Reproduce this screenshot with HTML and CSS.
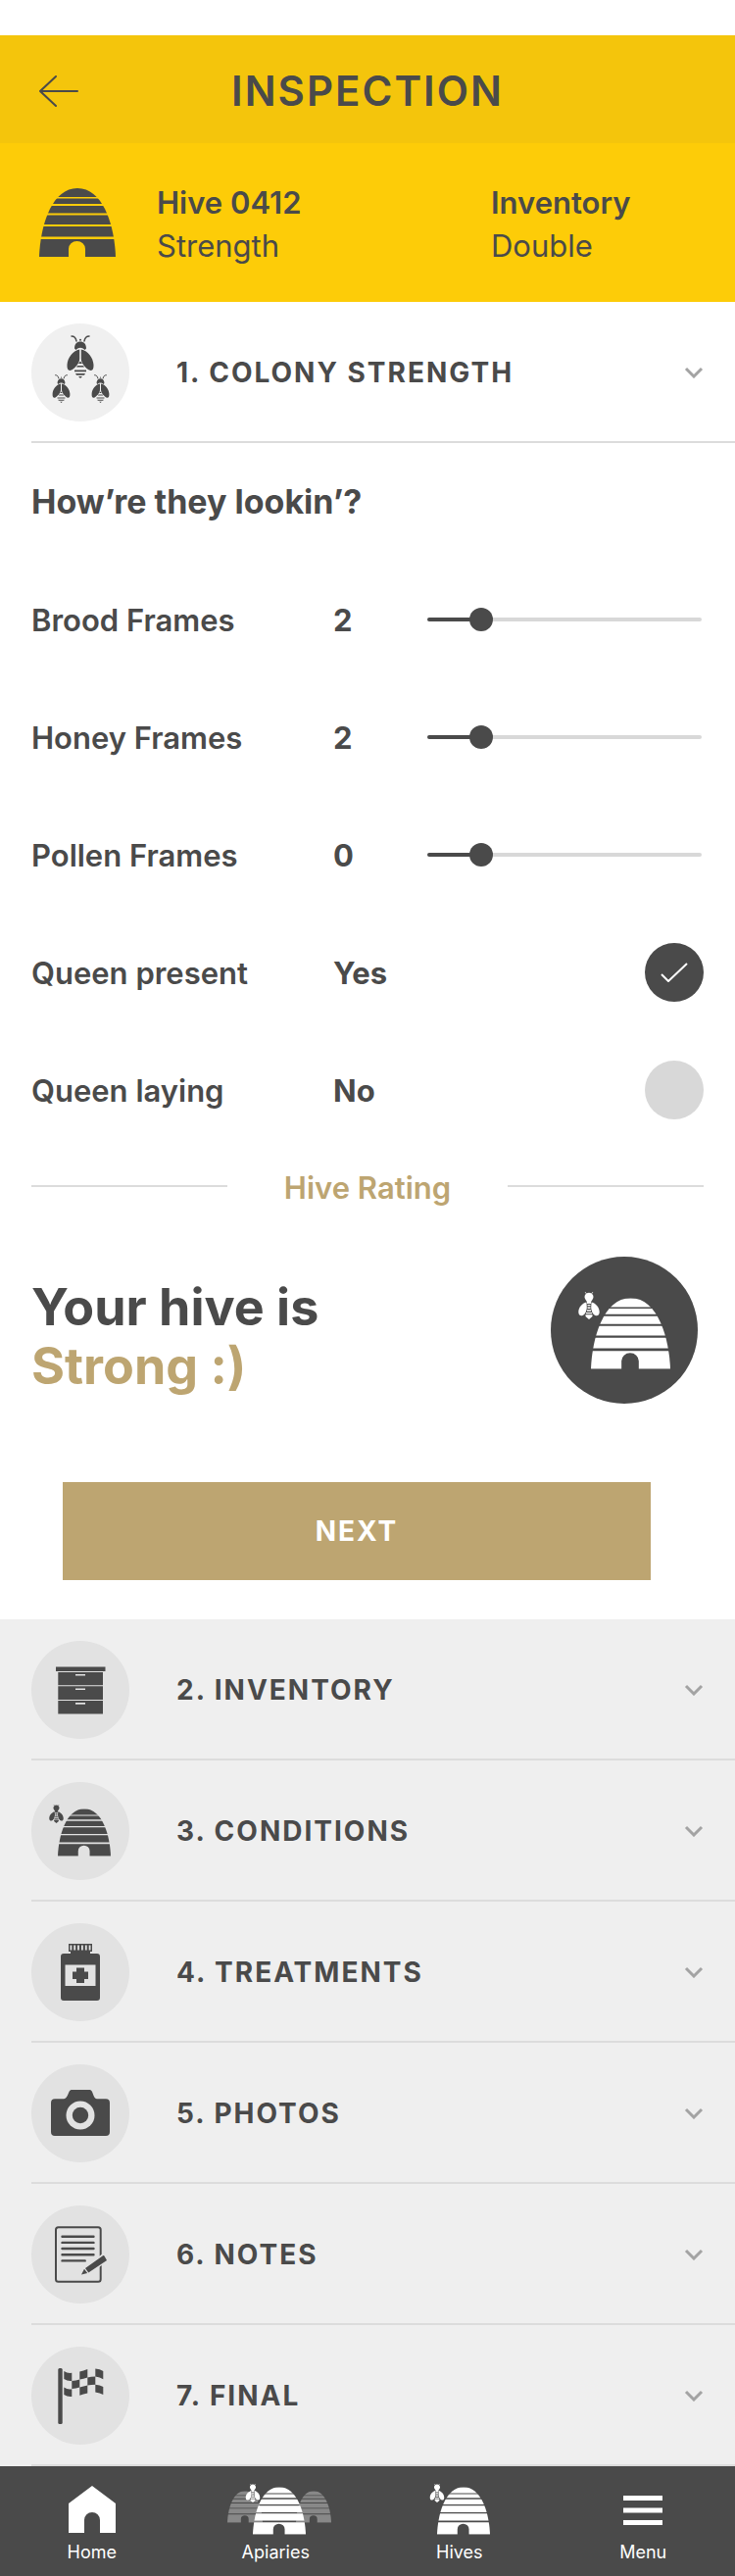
FILE: index.html
```html
<!DOCTYPE html>
<html lang="en">
<head>
<meta charset="utf-8">
<meta name="viewport" content="width=device-width, initial-scale=1">
<title>Inspection</title>
<link rel="stylesheet" href="styles.css">
</head>
<body>
<svg class="sprite" aria-hidden="true">
  <defs>
    <clipPath id="dome"><path d="M0 70C1 40 12 0 39 0C66 0 77 40 78 70Z"/></clipPath>
    <symbol id="hive" viewBox="0 0 78 70">
      <g clip-path="url(#dome)">
        <path d="M0 0H78V9H0ZM0 10.500H78V16H0ZM0 18H78V25.500H0ZM0 27.500H78V37H0ZM0 39H78V49.500H0ZM0 52H78V70H47V62a8.500 8 0 0 0-17 0V70H0Z"/>
      </g>
    </symbol>
    <symbol id="bee" viewBox="0 0 28 44">
      <path d="M5 1C8 1 9.500 3 10 6M23 1C20 1 18.500 3 18 6" fill="none" stroke="currentColor" stroke-width="1.500" stroke-linecap="round"/>
      <circle cx="14" cy="4.700" r="1"/>
      <path d="M8 13.500C8 9 10.500 6.500 14 6.500S20 9 20 13.500L18.500 15C17 13.500 15.500 12.800 14 12.800S11 13.500 9.500 15Z"/>
      <path d="M13.200 14.500C6 16 1 23 .500 30C.200 35 2 37 5 35.500C9.500 33 13.200 28 13.200 24ZM14.800 14.500C22 16 27 23 27.500 30C27.800 35 26 37 23 35.500C18.500 33 14.800 28 14.800 24Z"/>
      <path d="M14 26.500L16 29H12ZM11 31H17L18 32.500H10ZM8 35.500H20V37.200H8ZM9 39H19L18 40.700H10ZM12 42H16L14 44Z"/>
    </symbol>
    <symbol id="fly" viewBox="0 0 22 28">
      <path d="M7 0L8.500 2M15 0L13.500 2" fill="none" stroke="currentColor" stroke-width=".700"/>
      <path d="M11 .800C14 .800 15.500 3 15.500 5.200C15.500 7.500 13 9 13 10.500V12H9V10.500C9 9 6.500 7.500 6.500 5.200C6.500 3 8 .800 11 .800Z"/>
      <path d="M8.500 10.500C4 11.500 .300 16 .300 20.500C.300 23 1.500 24.500 3.800 24.300C6 24 8.500 21 8.800 16ZM13.500 10.500C18 11.500 21.700 16 21.700 20.500C21.700 23 20.500 24.500 18.200 24.300C16 24 13.500 21 13.200 16Z"/>
      <path d="M9.500 13H12.500V14.300H9.500ZM9.500 15.500H12.500V17H9.500ZM9 18.200H13V19.700H9ZM8 21H14V22.300H8ZM7.500 23.300H14.500V25L11 28L7.500 25Z"/>
    </symbol>
  </defs>
</svg>

<div class="screen">
  <header class="topbar">
    <a class="back" href="#" aria-label="Back">
      <svg width="40" height="32" viewBox="0 0 40 32" fill="none" stroke="currentColor" stroke-width="2" stroke-linecap="round"><path d="M39 16H1M17 1L1 16L17 31"/></svg>
    </a>
    <h1 class="title">INSPECTION</h1>
  </header>

  <section class="summary">
    <svg class="summary-icon" width="78" height="70"><use href="#hive"/></svg>
    <p class="summary-item"><strong>Hive 0412</strong><span>Strength</span></p>
    <p class="summary-item"><strong>Inventory</strong><span>Double</span></p>
  </section>

  <main>
    <h2 class="step">
      <button class="step-button" type="button" aria-expanded="true">
        <svg class="step-icon" viewBox="0 0 100 100">
          <use href="#bee" x="36" y="12" width="28" height="44"/>
          <use href="#bee" x="21" y="52" width="19" height="29"/>
          <use href="#bee" x="61" y="52" width="19" height="29"/>
        </svg>
        <span class="step-name">1. COLONY STRENGTH</span>
        <svg class="chevron" viewBox="0 0 20 12"><path d="M2 2L10 10L18 2"/></svg>
      </button>
    </h2>

    <form class="panel">
      <h3 class="question">How’re they lookin’?</h3>

      <div class="field">
        <label for="brood">Brood Frames</label>
        <output for="brood">2</output>
        <input class="slider" id="brood" type="range" min="0" max="12" value="2">
      </div>
      <div class="field">
        <label for="honey">Honey Frames</label>
        <output for="honey">2</output>
        <input class="slider" id="honey" type="range" min="0" max="12" value="2">
      </div>
      <div class="field">
        <label for="pollen">Pollen Frames</label>
        <output for="pollen">0</output>
        <input class="slider" id="pollen" type="range" min="-2" max="10" value="0">
      </div>
      <div class="field">
        <label for="present">Queen present</label>
        <output for="present">Yes</output>
        <span class="tick">
          <input id="present" type="checkbox" checked>
          <svg class="tick-mark" viewBox="0 0 28 20"><path d="M1 12L8 19L27 1"/></svg>
        </span>
      </div>
      <div class="field">
        <label for="laying">Queen laying</label>
        <output for="laying">No</output>
        <span class="tick"><input id="laying" type="checkbox"></span>
      </div>

      <h3 class="divider"><span>Hive Rating</span></h3>

      <div class="rating">
        <p class="rating-text">Your hive is<br><span class="gold">Strong :)</span></p>
        <svg class="rating-icon" viewBox="0 0 150 150">
          <use href="#fly" x="28" y="36" width="22" height="28"/>
          <use href="#hive" x="41" y="42" width="81" height="73"/>
        </svg>
      </div>

      <button class="next" type="submit">NEXT</button>
    </form>

    <div class="steps">
      <h2 class="step">
        <button class="step-button" type="button" aria-expanded="false">
          <svg class="step-icon" viewBox="0 0 100 100">
            <path d="M25 26.500H75.500V31H25ZM27.300 32H73V45.200H27.300ZM27.300 46.300H73V60H27.300ZM27.300 61H73V74.500H27.300Z"/>
            <path class="cut" d="M45 34H55V35.600H45ZM45 48.500H55V50.100H45ZM45 63.100H55V64.700H45Z"/>
          </svg>
          <span class="step-name">2. INVENTORY</span>
          <svg class="chevron" viewBox="0 0 20 12"><path d="M2 2L10 10L18 2"/></svg>
        </button>
      </h2>
      <h2 class="step">
        <button class="step-button" type="button" aria-expanded="false">
          <svg class="step-icon" viewBox="0 0 100 100">
            <use href="#fly" x="18" y="23" width="15" height="19"/>
            <use href="#hive" x="27" y="27" width="54" height="49"/>
          </svg>
          <span class="step-name">3. CONDITIONS</span>
          <svg class="chevron" viewBox="0 0 20 12"><path d="M2 2L10 10L18 2"/></svg>
        </button>
      </h2>
      <h2 class="step">
        <button class="step-button" type="button" aria-expanded="false">
          <svg class="step-icon" viewBox="0 0 100 100">
            <path d="M38 21H62V29H60V31H67a3 3 0 0 1 3 3V76a3 3 0 0 1-3 3H33a3 3 0 0 1-3-3V34a3 3 0 0 1 3-3H40V29H38Z"/>
            <path class="cut" d="M39.500 22.500h1.800v5h-1.800zM43.300 22.500h1.800v5h-1.800zM47.100 22.500h1.800v5h-1.800zM51 22.500h1.800v5H51zM54.900 22.500h1.800v5h-1.800zM58.700 22.500h1.800v5h-1.800zM34.500 42.500H65.500V64H34.500Z"/>
            <path d="M46 45.500H54V49.500H58V57H54V61H46V57H42V49.500H46Z"/>
          </svg>
          <span class="step-name">4. TREATMENTS</span>
          <svg class="chevron" viewBox="0 0 20 12"><path d="M2 2L10 10L18 2"/></svg>
        </button>
      </h2>
      <h2 class="step">
        <button class="step-button" type="button" aria-expanded="false">
          <svg class="step-icon" viewBox="0 0 100 100">
            <path d="M24 35.300H33C36 35.300 37 31 38.500 28C39.300 26.500 40 26 41.500 26H59C60.500 26 61.200 26.500 62 28C63.500 31 64 35.300 67 35.300H76a4 4 0 0 1 4 4V69a4 4 0 0 1-4 4H24a4 4 0 0 1-4-4V39.300a4 4 0 0 1 4-4Z"/>
            <circle class="cut" cx="50" cy="52" r="14.500"/>
            <circle cx="50" cy="52" r="8.200"/>
          </svg>
          <span class="step-name">5. PHOTOS</span>
          <svg class="chevron" viewBox="0 0 20 12"><path d="M2 2L10 10L18 2"/></svg>
        </button>
      </h2>
      <h2 class="step">
        <button class="step-button" type="button" aria-expanded="false">
          <svg class="step-icon" viewBox="0 0 100 100">
            <g fill="none" stroke="currentColor" stroke-width="2">
              <rect x="25" y="22.300" width="45.700" height="55.400" rx="2.500"/>
              <path stroke-width="2.400" stroke-linecap="round" d="M31.500 31.700H63.500M31.500 37.900H63.500M31.500 44H63.500M31.500 50.200H63.500M31.500 56.400H54.700"/>
            </g>
            <path class="cut" d="M50 72L54 63L73 49L79 56L59 70Z"/>
            <path d="M51 70.500L54 64.800L57.200 69ZM55 64L58.300 68.600L77 56L74.500 51.500C74 50.800 73.500 50.800 73 51.200Z"/>
          </svg>
          <span class="step-name">6. NOTES</span>
          <svg class="chevron" viewBox="0 0 20 12"><path d="M2 2L10 10L18 2"/></svg>
        </button>
      </h2>
      <h2 class="step">
        <button class="step-button" type="button" aria-expanded="false">
          <svg class="step-icon" viewBox="0 0 100 100">
            <rect x="27.300" y="22" width="4.400" height="57" rx="1.500"/>
            <path d="M33.300 25Q37 27.500 41.300 26.800V35Q37 35.500 33.300 33ZM33.300 41.500Q37 44 41.300 43.200V51Q37 51.500 33.300 49ZM41.300 35Q45.500 34.500 49.300 33.500V41.500Q45.500 42.500 41.300 43ZM49.300 25.500Q53 24.500 57.300 23V31.500Q53 33 49.300 33.500ZM49.300 41.500Q53 40.500 57.300 39.500V47.500Q53 48.500 49.300 49.800ZM57.300 31.500Q61 30.500 65.300 30.500V38.700Q61 38.700 57.300 39.500ZM65.300 22.500Q70 22.800 73.300 25V33.300Q70 31 65.300 30.500ZM65.300 38.700Q70 39 73.300 41V49Q70 47 65.300 46.500Z"/>
          </svg>
          <span class="step-name">7. FINAL</span>
          <svg class="chevron" viewBox="0 0 20 12"><path d="M2 2L10 10L18 2"/></svg>
        </button>
      </h2>
    </div>
  </main>

  <nav class="tabs">
    <a class="tab" href="#">
      <svg width="48" height="52" viewBox="0 0 48 52"><path d="M0 20L24 2L48 20V50H32V37a8 8 0 0 0-16 0V50H0Z"/></svg>
      <span>Home</span>
    </a>
    <a class="tab" href="#">
      <svg width="114" height="52" viewBox="-8 0 114 52">
        <g class="far">
          <use href="#hive" x="0" y="7" width="36" height="33"/>
          <use href="#hive" x="70" y="7" width="36" height="33"/>
        </g>
        <use href="#fly" x="18" y="0" width="16" height="19"/>
        <use href="#hive" x="26" y="3" width="54" height="49"/>
      </svg>
      <span>Apiaries</span>
    </a>
    <a class="tab" href="#">
      <svg width="62" height="52" viewBox="0 0 62 52">
        <use href="#fly" x="0" y="0" width="16" height="19"/>
        <use href="#hive" x="8" y="3" width="54" height="49"/>
      </svg>
      <span>Hives</span>
    </a>
    <a class="tab" href="#">
      <svg width="40" height="52" viewBox="0 0 40 52"><path d="M0 12H40V17H0ZM0 24.500H40V29.500H0ZM0 37H40V42H0Z"/></svg>
      <span>Menu</span>
    </a>
  </nav>
</div>
</body>
</html>
```
FILE: styles.css
```css
:root {
  --ink: #4a4a4a;
  --gold: #bda571;
  --line: #dcdcdc;
}

* {
  box-sizing: border-box;
  margin: 0;
  padding: 0;
}

body {
  background: #fff;
  color: var(--ink);
  font-family: Inter, "Liberation Sans", sans-serif;
  font-size: 31px;
  line-height: 44px;
}

svg {
  display: block;
  fill: currentColor;
}

button {
  border: 0;
  background: none;
  color: inherit;
  font: inherit;
  cursor: pointer;
}

a {
  color: inherit;
  text-decoration: none;
}

.sprite {
  position: absolute;
  width: 0;
  height: 0;
}

.screen {
  padding-top: 36px;
}

/* Header */

.topbar {
  display: grid;
  grid-template-columns: 40px 1fr 40px;
  align-items: center;
  height: 110px;
  padding: 4px 40px 0;
  background: #f4c50c;
}

.back svg {
  fill: none;
}

.title {
  font-size: 42px;
  font-weight: 600;
  letter-spacing: 2px;
  text-align: center;
}

.summary {
  display: grid;
  grid-template-columns: 78px 1fr 209px;
  column-gap: 42px;
  align-items: center;
  height: 162px;
  padding: 0 40px;
  background: #fdcc08;
}

.summary-item {
  display: grid;
  padding-top: 4px;
}

.summary-item strong {
  font-weight: 600;
}

/* Accordion steps */

.step {
  margin-left: 32px;
  border-bottom: 2px solid var(--line);
  font-size: 28px;
  font-weight: 700;
}

.step-button {
  display: flex;
  align-items: center;
  width: 100%;
  padding: 22px 32px 20px 0;
  letter-spacing: 2px;
  text-align: left;
}

.step-icon {
  flex: none;
  width: 100px;
  height: 100px;
  margin-right: 48px;
  border-radius: 50%;
  background: #f0f0f0;
}

.step-name {
  flex: 1;
}

.chevron {
  width: 20px;
  height: 12px;
  fill: none;
  stroke: #a3a3a3;
  stroke-width: 3;
}

.steps {
  background: #efefef;
}

.steps .step-icon {
  background: #e2e2e2;
}

.cut {
  fill: #e2e2e2;
}

/* Colony strength form */

.panel {
  padding: 38px 32px 40px;
}

.question {
  margin-bottom: 38px;
  font-size: 34px;
  font-weight: 700;
}

.field {
  display: grid;
  grid-template-columns: 308px 96px 1fr;
  align-items: center;
  height: 120px;
  font-weight: 600;
}

.field label,
.field output {
  padding-top: 2px;
}

.field output {
  font-weight: 700;
}

.slider {
  width: calc(100% - 2px);
  height: 24px;
  appearance: none;
  background: none;
}

.slider::-webkit-slider-runnable-track {
  height: 4px;
  border-radius: 2px;
  background: linear-gradient(to right, var(--ink) 20%, #d8d8d8 20%);
}

.slider::-webkit-slider-thumb {
  width: 24px;
  height: 24px;
  margin-top: -10px;
  appearance: none;
  border-radius: 50%;
  background: var(--ink);
}

.tick {
  display: grid;
  justify-self: end;
  place-items: center;
}

.tick > * {
  grid-area: 1 / 1;
}

.tick input {
  width: 60px;
  height: 60px;
  appearance: none;
  border-radius: 50%;
  background: #d8d8d8;
}

.tick input:checked {
  background: var(--ink);
}

.tick-mark {
  width: 28px;
  height: 20px;
  fill: none;
  stroke: #fff;
  stroke-width: 2;
  pointer-events: none;
}

.divider {
  display: grid;
  grid-template-columns: 200px 1fr 200px;
  align-items: center;
  margin: 14px 0 48px;
  color: var(--gold);
  font-size: 31px;
  font-weight: 600;
  text-align: center;
}

.divider span {
  padding-top: 4px;
}

.divider::before,
.divider::after {
  height: 2px;
  background: var(--line);
  content: "";
}

.rating {
  display: flex;
  align-items: center;
  justify-content: space-between;
  padding-right: 6px;
}

.rating-text {
  padding-top: 14px;
  font-size: 52px;
  font-weight: 700;
  line-height: 60px;
}

.gold {
  color: var(--gold);
}

.rating-icon {
  width: 150px;
  height: 150px;
  border-radius: 50%;
  background: var(--ink);
  color: #fff;
}

.next {
  display: block;
  width: calc(100% - 86px);
  height: 100px;
  margin: 80px 54px 0 32px;
  background: var(--gold);
  color: #fff;
  font-size: 28px;
  font-weight: 700;
  letter-spacing: 2px;
}

/* Bottom navigation */

.tabs {
  display: grid;
  grid-template-columns: repeat(4, 1fr);
  height: 112px;
  padding-top: 18px;
  background: var(--ink);
  color: #fff;
  font-size: 18px;
  font-weight: 400;
  line-height: 24px;
}

.tab {
  display: grid;
  align-content: start;
  justify-items: center;
  row-gap: 6px;
}

.far {
  color: #888;
  fill: #888;
}
```
